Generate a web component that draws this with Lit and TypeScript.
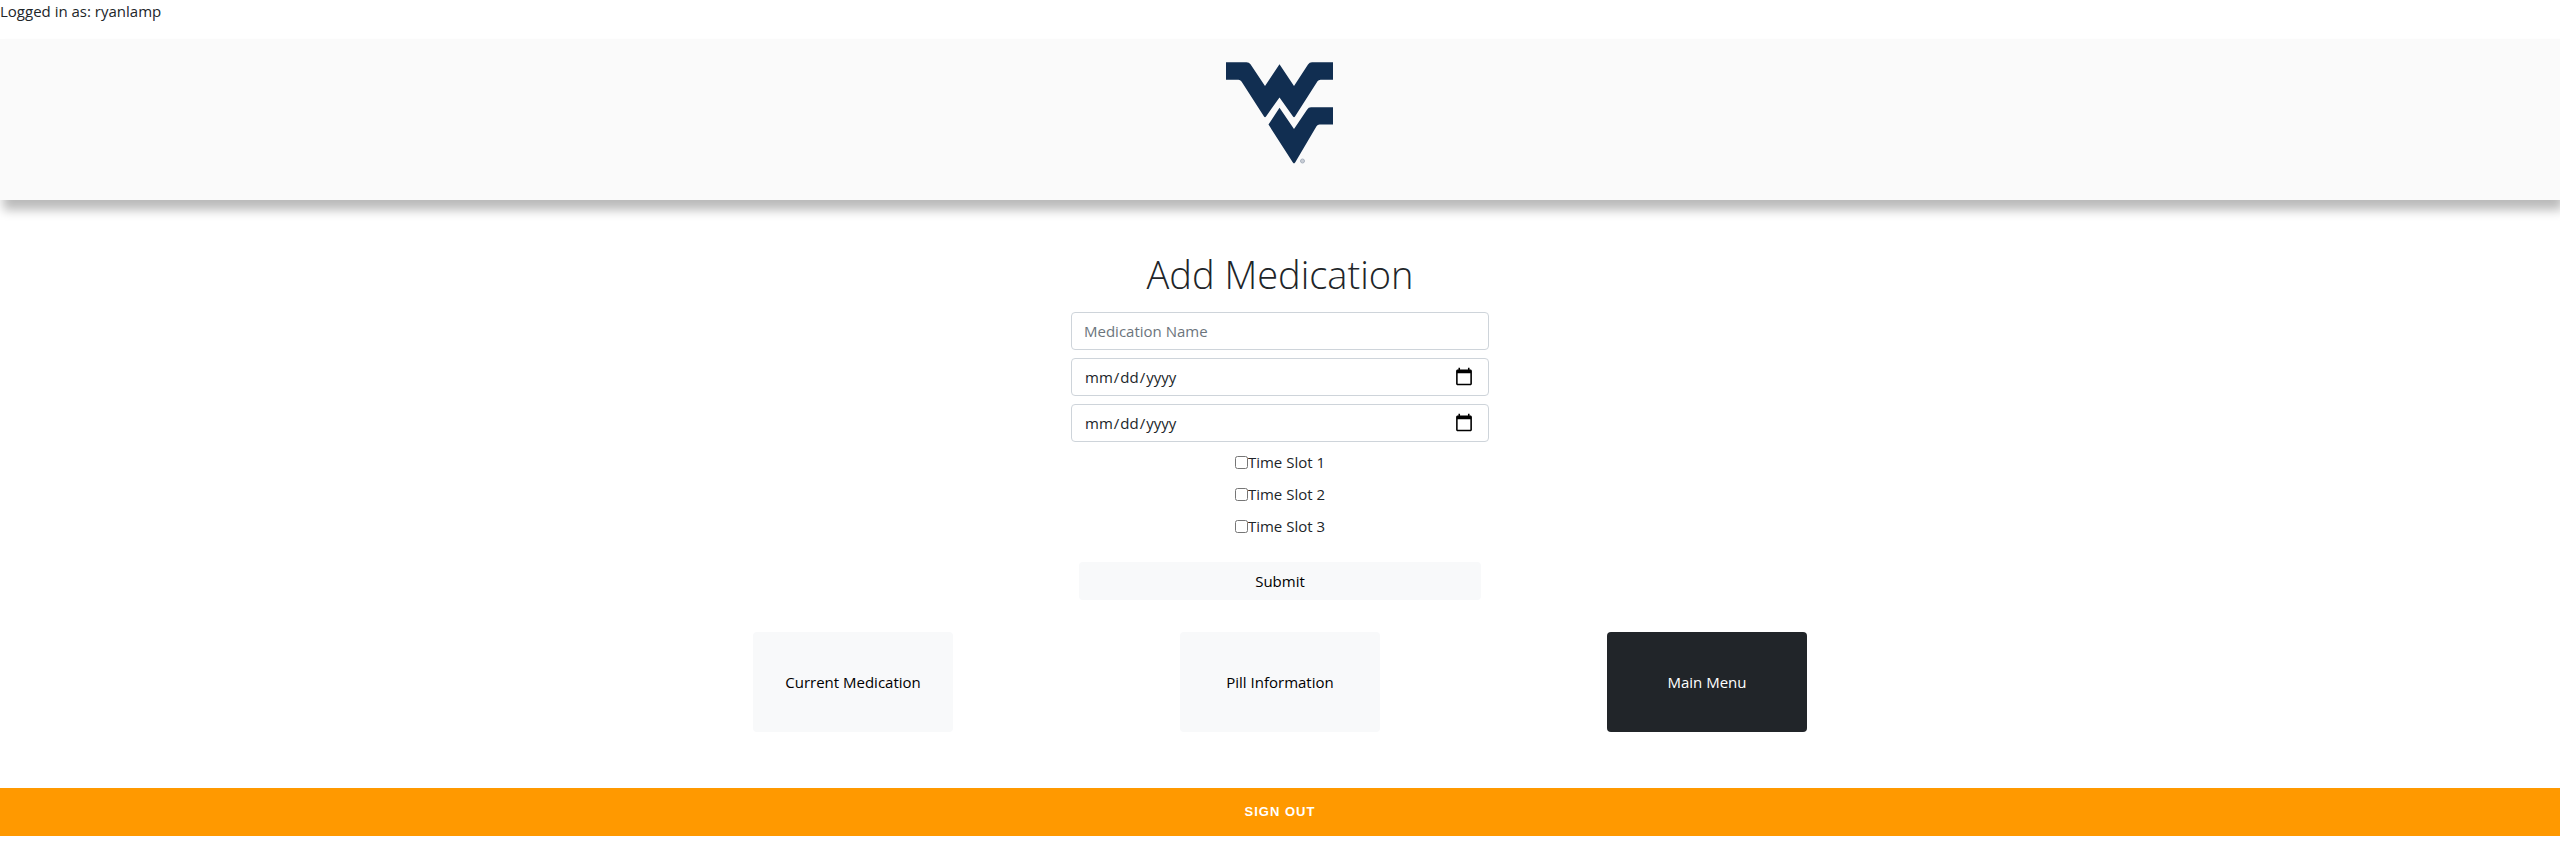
import { LitElement, html, css } from "lit";
import { customElement } from "lit/decorators.js";

@customElement("app-root")
export class AppRoot extends LitElement {
  static styles = css`
    :host {
      display: block;
      font-family: "Open Sans", "Noto Sans", sans-serif;
      font-size: 15px;
      line-height: 24px;
      color: #212529;
      background: #fff;
    }
    * { box-sizing: border-box; }
    .user { margin: 0 0 17px; line-height: 22px; }
    .banner {
      display: flex;
      justify-content: center;
      padding: 20px 0 32px;
      background: #fafafa;
      box-shadow: 3px 10px 10px #bbb;
    }
    .logo { display: block; width: 110px; height: 109px; }
    main { padding-top: 50px; }
    h1 {
      margin: 0 0 14px;
      font-size: 38px;
      line-height: 48px;
      font-weight: 300;
      text-align: center;
    }
    form {
      width: 418px;
      max-width: 100%;
      margin: 0 auto;
      display: flex;
      flex-direction: column;
      gap: 8px;
    }
    .field {
      display: block;
      width: 100%;
      height: 38px;
      padding: 6px 12px;
      border: 1px solid #ced4da;
      border-radius: 4px;
      background: #fff;
      color: #212529;
      font: inherit;
    }
    .field::placeholder { color: #6c757d; opacity: 1; }
    .field::-webkit-calendar-picker-indicator { width: 20px; height: 20px; padding: 2px; }
    .slot { display: flex; justify-content: center; align-items: center; }
    .slot input { width: 13px; height: 13px; margin: 0; }
    button { border: 0; border-radius: 4px; font: inherit; color: #000; background: #f8f9fa; }
    .submit { height: 38px; margin: 16px 8px 0; }
    .menu {
      display: flex;
      justify-content: space-between;
      width: 1054px;
      max-width: 100%;
      margin: 32px auto 56px;
    }
    .menu button { width: 200px; height: 100px; }
    .menu .dark { background: #212529; color: #fff; }
    .signout {
      display: block;
      width: 100%;
      height: 48px;
      border-radius: 0;
      background: #f90;
      color: #fff;
      font: bold 13px/24px "Liberation Sans", Arial, sans-serif;
      letter-spacing: 1px;
    }
  `;

  render() {
    return html`
      <p class="user">Logged in as: ryanlamp</p>
      <header class="banner">
        <svg class="logo" viewBox="0 0 110 109" role="img" aria-label="West Virginia University">
          <g fill="#112e51">
            <path d="M1 3.3H21.500Q24 3.300 25.500 5.300L40 27 54.500 5.300 69 27 83 5.500Q84.500 3.300 87 3.300H108V20.700H95.500Q93.500 20.700 92.500 22.300L70 57.500Q69 59 68 57.500L54.500 38.500 41 57.500Q40 59 39 57.500L16.500 22.500Q15.200 20.700 13.500 20.700H1Z"/>
            <path d="M54.500 48.800 69 70 82 50.700Q83.500 48.300 86 48.300H108V65.600H94.500Q92.500 65.600 91.500 67.300L70.300 103.300Q69 105.500 67.700 103.300L43.500 65.600Z"/>
          </g>
          <circle cx="77.500" cy="102" r="2" fill="#c9ced6" stroke="#a9b1be" stroke-width="1"/>
        </svg>
      </header>
      <main>
        <h1>Add Medication</h1>
        <form @submit=${(e: Event) => e.preventDefault()}>
          <input class="field" type="text" placeholder="Medication Name" aria-label="Medication Name" />
          <input class="field" type="date" aria-label="Start date" />
          <input class="field" type="date" aria-label="End date" />
          ${[1, 2, 3].map((n) => html`<label class="slot"><input type="checkbox" />Time Slot ${n}</label>`)}
          <button class="submit" type="submit">Submit</button>
        </form>
        <nav class="menu">
          <button type="button">Current Medication</button>
          <button type="button">Pill Information</button>
          <button type="button" class="dark">Main Menu</button>
        </nav>
      </main>
      <button class="signout" type="button">SIGN OUT</button>
    `;
  }
}
